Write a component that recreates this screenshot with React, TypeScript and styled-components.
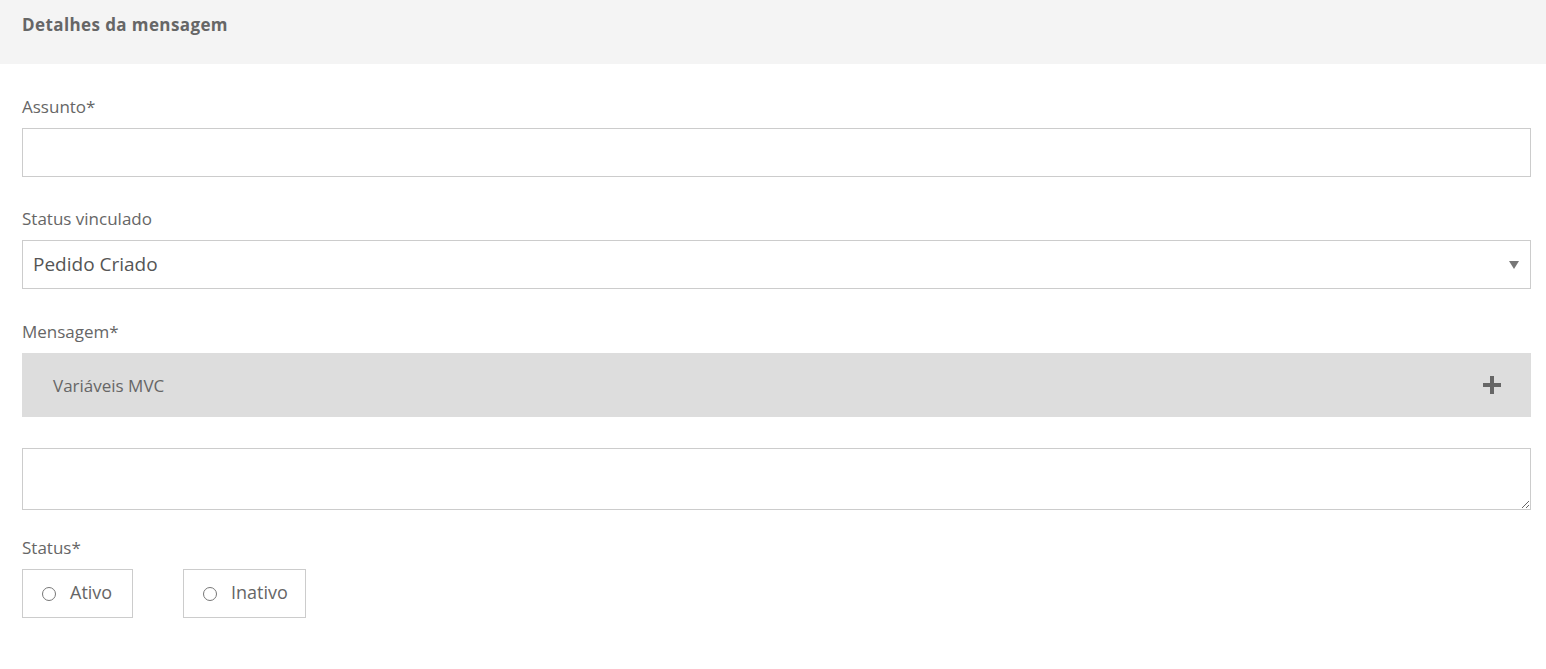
import React from "react";
import styled, { createGlobalStyle } from "styled-components";

const Global = createGlobalStyle`
  html, body { margin: 0; padding: 0; background: #fff; }
  body { font-family: "Open Sans", "Lato", sans-serif; color: #666; }
  * { box-sizing: border-box; }
`;

const Page = styled.div`
  width: 1546px;
`;

const Header = styled.div`
  height: 64px;
  background: #f4f4f4;
  padding: 14px 22px 0;
`;

const Title = styled.h2`
  margin: 0;
  font-size: 17px;
  font-weight: 700;
  color: #666;
  line-height: 22px;
  letter-spacing: 0.4px;
`;

const Body = styled.div`
  padding: 32px 15px 0 22px;
  display: flex;
  flex-direction: column;
`;

const Field = styled.div<{ $mb?: number }>`
  display: flex;
  flex-direction: column;
  margin-bottom: ${(p) => p.$mb ?? 0}px;
`;

const Label = styled.label`
  font-size: 17px;
  line-height: 22px;
  color: #666;
  margin-bottom: 10px;
`;

const Input = styled.input`
  height: 49px;
  width: 100%;
  border: 1px solid #ccc;
  outline: none;
  font: inherit;
  padding: 0 10px;
`;

const SelectBox = styled.div`
  height: 49px;
  border: 1px solid #ccc;
  display: flex;
  align-items: center;
  justify-content: space-between;
  padding: 0 11px 2px 10px;
  font-size: 19px;
  color: #555;
`;

const Arrow = styled.span`
  width: 0;
  height: 0;
  margin-top: 2px;
  border-left: 5px solid transparent;
  border-right: 5px solid transparent;
  border-top: 8px solid #777;
`;

const Accordion = styled.div`
  height: 64px;
  background: #dddddd;
  display: flex;
  align-items: center;
  justify-content: space-between;
  padding: 0 30px 0 31px;
  font-size: 17px;
  color: #666;
  margin-bottom: 31px;
`;

const Plus = styled.svg`
  width: 18px;
  height: 18px;
`;

const TextArea = styled.textarea`
  height: 62px;
  width: 100%;
  border: 1px solid #ccc;
  outline: none;
  font: inherit;
  resize: vertical;
  display: block;
`;

const RadioRow = styled.div`
  display: flex;
  gap: 50px;
`;

const RadioBox = styled.label<{ $w: number }>`
  width: ${(p) => p.$w}px;
  height: 49px;
  border: 1px solid #ccc;
  display: flex;
  align-items: center;
  padding-left: 19px;
  gap: 14px;
  font-size: 18px;
  color: #666;
`;

const RadioText = styled.span`
  margin-top: -3px;
`;

const Circle = styled.span`
  width: 14px;
  height: 14px;
  border-radius: 50%;
  border: 1px solid #777;
`;

export default function App() {
  return (
    <Page>
      <Global />
      <Header>
        <Title>Detalhes da mensagem</Title>
      </Header>
      <Body>
        <Field $mb={31}>
          <Label>Assunto*</Label>
          <Input />
        </Field>
        <Field $mb={32}>
          <Label>Status vinculado</Label>
          <SelectBox>
            <span>Pedido Criado</span>
            <Arrow />
          </SelectBox>
        </Field>
        <Field>
          <Label>Mensagem*</Label>
          <Accordion>
            <span>Variáveis MVC</span>
            <Plus viewBox="0 0 18 18">
              <rect x="0" y="7" width="18" height="4" fill="#666" />
              <rect x="7" y="0" width="4" height="18" fill="#666" />
            </Plus>
          </Accordion>
          <TextArea />
        </Field>
        <Field style={{ marginTop: 27 }}>
          <Label>Status*</Label>
          <RadioRow>
            <RadioBox $w={111}>
              <Circle />
              <RadioText>Ativo</RadioText>
            </RadioBox>
            <RadioBox $w={123}>
              <Circle />
              <RadioText>Inativo</RadioText>
            </RadioBox>
          </RadioRow>
        </Field>
      </Body>
    </Page>
  );
}
